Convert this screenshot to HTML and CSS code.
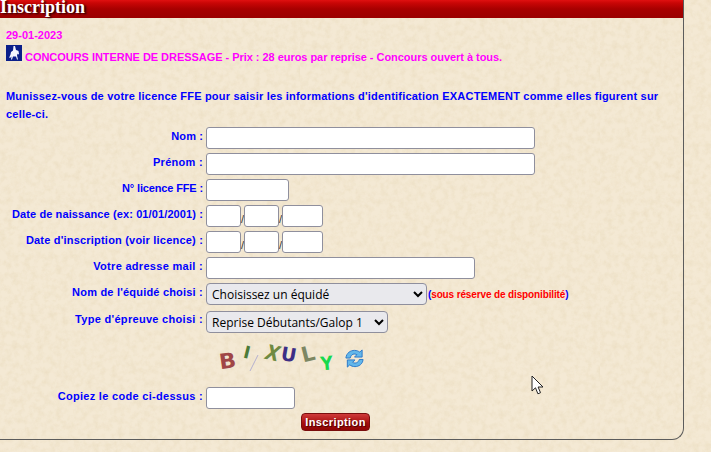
FILE: index.html
```html
<!DOCTYPE html>
<html lang="fr">
<head>
	<meta charset="UTF-8">
	<title>Inscription</title>
	<link rel="stylesheet" href="styles.css">
</head>
<body>
	<div class="panel">
		<h1 class="panel-title">Inscription</h1>
		<div class="panel-body">
			<p class="date">29-01-2023</p>
			<p class="contest">
				<svg class="contest-icon" viewBox="0 0 16 16" width="16" height="16" aria-hidden="true">
					<rect width="16" height="16" fill="#0b1f8a"/>
					<path d="M7.500 1h1.500l.5 2 .5 2 1.500 .5 1 .5 .5 3-1 .5-.5-1-.5 2 1 4h-1l-1-3h-3l-1 3h-1l.5-3-1.500 1.500-.8-.5 1.300-3 .5-2.500 2-1.500z" fill="#f4f6ff"/>
				</svg>
				CONCOURS INTERNE DE DRESSAGE - Prix : 28 euros par reprise - Concours ouvert à tous.
			</p>
			<p class="notice">Munissez-vous de votre licence FFE pour saisir les informations d'identification EXACTEMENT comme elles figurent sur celle-ci.</p>

			<form class="form-grid">
				<label for="nom">Nom :</label>
				<div><input type="text" id="nom" class="w-name"></div>

				<label for="prenom" class="sp-wide">Prénom :</label>
				<div><input type="text" id="prenom" class="w-name"></div>

				<label for="licence" class="sp-tight">N° licence FFE :</label>
				<div><input type="text" id="licence" class="w-licence"></div>

				<label for="nj">Date de naissance (ex: 01/01/2001) :</label>
				<div class="date-fields">
					<input type="text" id="nj" class="w-day"><span>/</span><input type="text" class="w-day"><span>/</span><input type="text" class="w-year">
				</div>

				<label for="ij" class="sp-mid">Date d'inscription (voir licence) :</label>
				<div class="date-fields">
					<input type="text" id="ij" class="w-day"><span>/</span><input type="text" class="w-day"><span>/</span><input type="text" class="w-year">
				</div>

				<label for="mail" class="sp-wide">Votre adresse mail :</label>
				<div><input type="text" id="mail" class="w-mail"></div>

				<label for="equide" class="sp-mid">Nom de l'équidé choisi :</label>
				<div class="select-row">
					<select id="equide" class="w-horse"><option>Choisissez un équidé</option></select>
					<span class="reserve">(<span class="reserve-red">sous réserve de disponibilité</span>)</span>
				</div>

				<label for="epreuve" class="type-label sp-wide">Type d'épreuve choisi :</label>
				<div class="type-field">
					<select id="epreuve" class="w-type"><option>Reprise Débutants/Galop 1</option></select>
				</div>

				<div></div>
				<div class="captcha">
					<span class="cap cap-b">B</span>
					<span class="cap cap-i">I</span>
					<svg class="cap-line" viewBox="0 0 10 18" width="10" height="18" aria-hidden="true"><path d="M9 1L1 17" stroke="#b5b0cf" stroke-width="1"/></svg>
					<span class="cap cap-x">X</span>
					<span class="cap cap-u">U</span>
					<span class="cap cap-l">L</span>
					<span class="cap cap-y">Y</span>
					<svg class="refresh" viewBox="0 0 22 22" width="21" height="21" aria-hidden="true">
						<path d="M2 10.500C2.500 5 7 2.500 11 2.500c2.500 0 4 .8 5.500 1.800L19 2v7.500h-8l2.500-2.500c-2.500-1.500-6-.8-7 3.500z" fill="#63b7ea" stroke="#2a78c8"/>
						<path d="M20 12c-.5 5-4.500 7.500-8.500 7.500-2.500 0-4-.8-5.500-1.800L3.500 20v-7.500h8L9 15c2.500 1.500 6 .8 7-3z" fill="#63b7ea" stroke="#2a78c8"/>
					</svg>
				</div>

				<label for="code" class="code-label sp-wide">Copiez le code ci-dessus :</label>
				<div class="code-field"><input type="text" id="code" class="w-code"></div>

				<div></div>
				<div class="submit-row"><button type="button" class="btn-red">Inscription</button></div>
			</form>
		</div>
	</div>

	<!-- Mouse pointer caught in the capture -->
	<svg class="pointer" viewBox="0 0 13 20" width="13" height="20" aria-hidden="true">
		<path d="M1 1v15l3.500-3.200 2.400 6 2.600-1.100-2.400-5.700H12z" fill="#fff" stroke="#222" stroke-width="1"/>
	</svg>
</body>
</html>
```

FILE: styles.css
```css
* {
	box-sizing: border-box;
}

body {
	margin: 0;
	height: 452px;
	overflow: hidden;
	background-color: #f4e9d4;
	background-image: url("data:image/svg+xml,%3Csvg xmlns='http://www.w3.org/2000/svg' width='300' height='300'%3E%3Cfilter id='n'%3E%3CfeTurbulence type='fractalNoise' baseFrequency='0.16' numOctaves='4' stitchTiles='stitch'/%3E%3CfeColorMatrix values='0 0 0 0 0.78 0 0 0 0 0.66 0 0 0 0 0.45 0 0 0 .8 -0.3'/%3E%3C/filter%3E%3Crect width='300' height='300' filter='url(%23n)'/%3E%3C/svg%3E");
	font-family: "Liberation Sans", Arial, sans-serif;
	font-size: 11px;
	font-weight: bold;
	color: #0000ff;
}

p {
	margin: 0;
}

/* Panel with the red title bar */
.panel {
	width: 684px;
	height: 440px;
	border-right: 1px solid #5c5c5c;
	border-bottom: 1px solid #5c5c5c;
	border-bottom-right-radius: 12px;
}

.panel-title {
	margin: 0;
	height: 18px;
	background: linear-gradient(#e01010 0, #c90606 3px, #a80000 9px, #9a0000 100%);
	font-family: "Liberation Serif", "Times New Roman", serif;
	font-size: 18px;
	line-height: 15px;
	color: #fff;
	text-shadow: 2px 1px 2px #2a0000;
}

.panel-body {
	padding: 10px 0 0 6px;
}

.date {
	color: #ff00ff;
	line-height: 14px;
}

.contest {
	margin-top: 3px;
	height: 39px;
	color: #ff00ff;
	line-height: 16px;
	letter-spacing: -0.04px;
}

.notice {
	width: 670px;
	line-height: 18px;
	padding-top: 3px;
	letter-spacing: 0.2px;
}

/* Form: labels on the left, fields on the right */
.form-grid {
	display: grid;
	grid-template-columns: 197px 1fr;
	column-gap: 3px;
	row-gap: 4px;
	margin-top: 4px;
}

.form-grid label {
	text-align: right;
	line-height: 18px;
	letter-spacing: 0.11px;
}

.form-grid .sp-wide { letter-spacing: 0.3px; }
.form-grid .sp-mid { letter-spacing: 0.2px; }
.form-grid .sp-tight { letter-spacing: -0.14px; }

input,
select {
	display: block;
	height: 22px;
	margin: 0;
	background: #fff;
	border: 1px solid #8f8f9d;
	border-radius: 3px;
	padding: 0 4px;
}

select {
	height: 22px;
	padding-left: 1px;
	background-color: #e9e9ed;
	font-family: "Open Sans", sans-serif;
	font-size: 12px;
	font-weight: normal;
	color: #000;
	border-radius: 4px;
}

.w-name { width: 329px; }
.w-licence { width: 83px; }
.w-day { width: 35px; }
.w-year { width: 41px; }
.w-mail { width: 269px; }
.w-horse { width: 221px; }
.w-type { width: 182px; }
.w-code { width: 89px; }

.date-fields {
	display: flex;
	align-items: flex-end;
}

.date-fields span {
	width: 3px;
	font-weight: normal;
	color: #333;
	line-height: 16px;
}

.select-row {
	display: flex;
	align-items: center;
}

.reserve {
	font-size: 10px;
	margin-left: 1px;
	letter-spacing: -0.13px;
}

.reserve-red {
	color: #ff0000;
}

.type-label {
	margin-top: 1px;
}

.type-field {
	margin-top: 2px;
}

/* Captcha letters */
.captcha {
	height: 40px;
	margin-top: 3px;
	display: flex;
	font-family: "DejaVu Sans", sans-serif;
	font-size: 21px;
}

.cap {
	display: block;
	line-height: 26px;
}

.cap-b { margin: 8px 0 0 14px; color: #a04646; transform: rotate(-8deg) scaleX(1.05); }
.cap-i { margin: -1px 0 0 6px; color: #4c7a38; font-size: 17px; transform: rotate(14deg); }
.cap-line { margin: 14px 0 0 1px; }
.cap-x { margin: 0 0 0 3px; color: #6f8a41; transform: rotate(12deg) skewX(-10deg) scaleX(.85); }
.cap-u { margin: 1px 0 0 1px; color: #3d2e85; transform: rotate(10deg); font-size: 19px; }
.cap-l { margin: 1px 0 0 8px; color: #7d8763; transform: rotate(-14deg); }
.cap-y { margin: 10px 0 0 4px; color: #18d94e; transform: rotate(-6deg) scaleX(.9); font-size: 19px; }
.refresh { margin: 8px 0 0 10px; }

.code-label,
.code-field {
	margin-top: 3px;
}

.submit-row {
	padding-left: 95px;
}

.btn-red {
	display: block;
	width: 69px;
	height: 18px;
	padding: 0;
	border: 1px solid #7a0d0d;
	border-radius: 4px;
	background: linear-gradient(#cf3a3a, #a80f0f 55%, #8f0505);
	font-family: "Liberation Sans", Arial, sans-serif;
	font-size: 11px;
	font-weight: bold;
	letter-spacing: 0.4px;
	color: #fff;
	text-shadow: 1px 1px 1px #400;
}

.pointer {
	position: absolute;
	left: 531px;
	top: 375px;
}
```
